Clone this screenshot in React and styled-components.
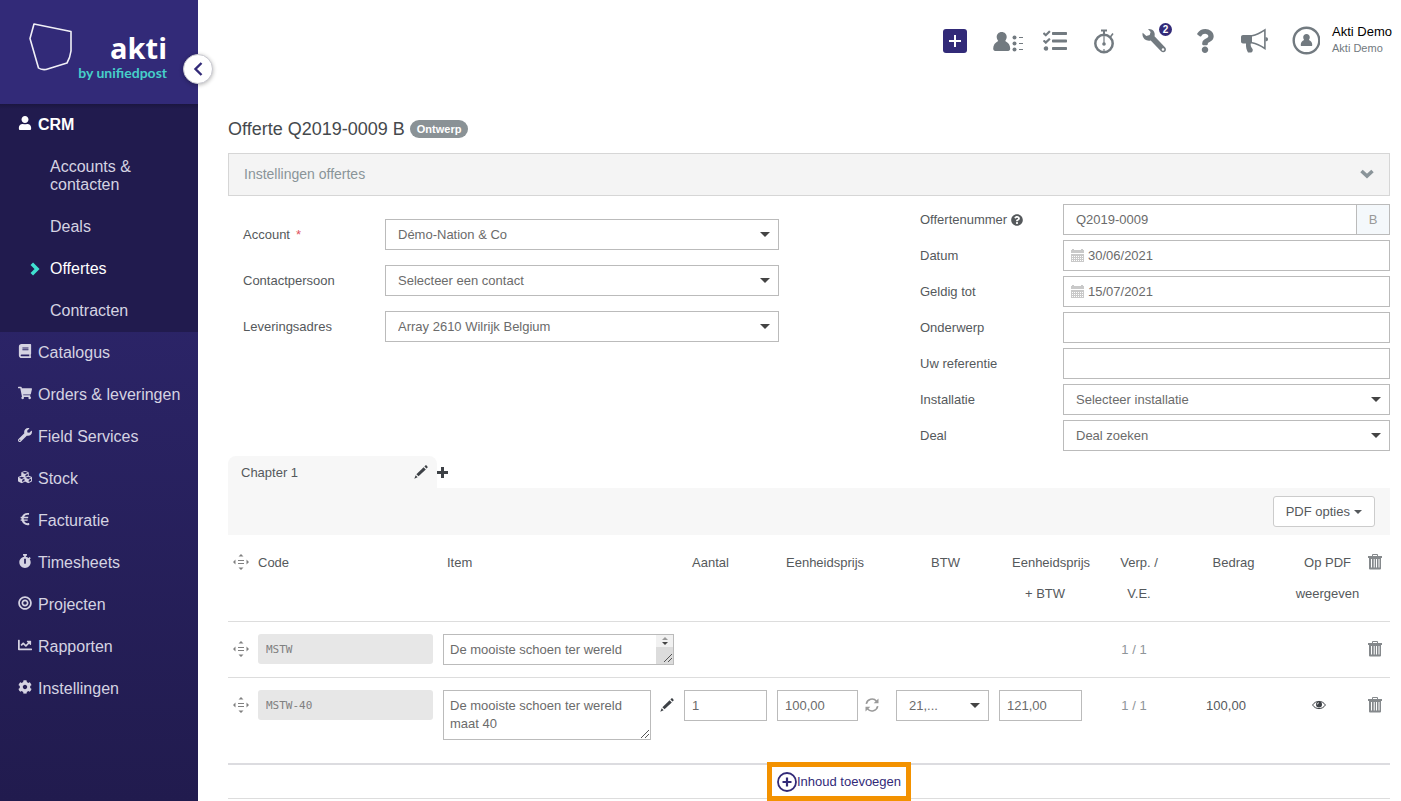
import styled, { createGlobalStyle, css } from "styled-components";
import {
  FaUser,
  FaBook,
  FaShoppingCart,
  FaWrench,
  FaCubes,
  FaEuroSign,
  FaStopwatch,
  FaBullseye,
  FaChartLine,
  FaCog,
  FaTasks,
  FaQuestion,
  FaQuestionCircle,
} from "react-icons/fa";

const menu = [
  { label: "Catalogus", Icon: FaBook },
  { label: "Orders & leveringen", Icon: FaShoppingCart },
  { label: "Field Services", Icon: FaWrench },
  { label: "Stock", Icon: FaCubes },
  { label: "Facturatie", Icon: FaEuroSign },
  { label: "Timesheets", Icon: FaStopwatch },
  { label: "Projecten", Icon: FaBullseye },
  { label: "Rapporten", Icon: FaChartLine },
  { label: "Instellingen", Icon: FaCog },
];

const subMenu = [
  { label: "Accounts & contacten" },
  { label: "Deals" },
  { label: "Offertes", active: true },
  { label: "Contracten" },
];

/* Icons */

const LogoShape = () => (
  <svg width="46" height="50" viewBox="0 0 46 50" fill="none" stroke="#f1f0f7" strokeWidth="1.600" strokeLinejoin="round">
    <path d="M6 2 L43 9.500 L43 29 Q42 36 39 41 L18 47.500 Q13 48 10.500 46 L2 16.500 Z" />
  </svg>
);

const ChevronLeft = () => (
  <svg width="10" height="16" viewBox="0 0 10 16" fill="none" stroke="#322a78" strokeWidth="2.400">
    <path d="M8.500 2 L2.500 8 L8.500 14" />
  </svg>
);

const ChevronRight = () => (
  <svg width="10" height="14" viewBox="0 0 10 14" fill="none" stroke="#40e0d0" strokeWidth="3.600">
    <path d="M1.800 1.800 L7 7 L1.800 12.200" />
  </svg>
);

const ChevronDown = () => (
  <svg width="14" height="10" viewBox="0 0 14 10" fill="none" stroke="#8a9499" strokeWidth="3.600">
    <path d="M1.500 2 L7 7 L12.500 2" />
  </svg>
);

const PlusIcon = () => (
  <svg width="14" height="14" viewBox="0 0 14 14" fill="#fff">
    <path d="M6 1h2v5h5v2H8v5H6V8H1V6h5z" />
  </svg>
);

const ContactsIcon = () => (
  <svg width="36" height="24" viewBox="0 0 36 24" fill="#727a80">
    <path d="M14.700 3c3 0 5 2.300 5 5 0 1.600-.7 2.700-1.500 4 3.200 1.600 5 4.200 5 7.500 0 1.500-.8 2.500-2 2.500H8.200c-1.200 0-2-1-2-2.500 0-3.300 1.800-5.900 5-7.500-.8-1.300-1.500-2.400-1.500-4 0-2.700 2-5 5-5z" />
    <circle cx="27.500" cy="8.500" r="2" />
    <circle cx="27.500" cy="14.500" r="2" />
    <circle cx="27.500" cy="20.500" r="2" />
    <path d="M32 8h4v1h-4zM32 14h4v1h-4zM32 20h4v1h-4z" />
  </svg>
);

const TimerIcon = () => (
  <svg width="24" height="26" viewBox="0 0 24 26" fill="none" stroke="#727a80">
    <circle cx="11" cy="15.500" r="8.700" strokeWidth="2.500" />
    <path d="M8 2.500h6" strokeWidth="2" />
    <path d="M11 3v4" strokeWidth="2" />
    <path d="M17 9.500l3-4" strokeWidth="1.500" />
    <path d="M11 8v8" strokeWidth="1.200" />
    <path d="M11 21v2" strokeWidth="1.200" />
    <circle cx="11" cy="16" r="1.800" fill="#727a80" stroke="none" />
  </svg>
);

const SpannerIcon = () => (
  <svg width="26" height="26" viewBox="0 0 26 26" fill="#727a80">
    <path
      fillRule="evenodd"
      d="M6 1c4-.7 7.300 2.300 6.700 6.300l-.2 1 10.500 11c1.300 1.300 1.300 3 .2 4.200-1.200 1.100-3 1-4.200-.2L8.700 12.500c-4 1-7.700-1.500-8.200-5.500-.1-1 0-1.600.2-2.200l3.600 3.300 3.400-1.100.9-3zM21 20.200a1.300 1.300 0 1 0 0 2.600 1.300 1.300 0 0 0 0-2.600z"
    />
  </svg>
);

const MegaphoneIcon = () => (
  <svg width="32" height="26" viewBox="0 0 32 26" fill="#727a80">
    <path d="M4 7h9v8.500h-1.200c-.5 1.700.2 3.700 1.700 5.500.8 1-.2 3.500-1.500 3.500H9c-1.400-2.500-2.300-5.500-2-9H4c-1.100 0-2-.9-2-2V9c0-1.100.9-2 2-2z" />
    <path d="M13 7.700c4.300-.8 8.700-3 12.900-5.800v18.600c-4.200-2.800-8.600-5-12.900-5.800" fill="none" stroke="#727a80" strokeWidth="1.600" />
    <path d="M26.500 9.200h.8c1 0 1.700.9 1.700 2s-.7 2-1.700 2h-.8z" />
  </svg>
);

const AvatarIcon = () => (
  <svg width="30" height="30" viewBox="0 0 30 30" fill="#727a80">
    <circle cx="16.500" cy="14.500" r="12.800" fill="none" stroke="#727a80" strokeWidth="2.400" />
    <path d="M16.500 8c2 0 3.300 1.500 3.300 3.300 0 1-.4 1.800-.9 2.600 1.900.8 3.300 2.300 3.300 4.300v1.200c0 .3-.3.600-.6.600H11.400c-.3 0-.6-.3-.6-.6v-1.200c0-2 1.400-3.500 3.300-4.300-.5-.8-.9-1.600-.9-2.600 0-1.800 1.300-3.300 3.300-3.300z" />
  </svg>
);

const CalendarIcon = () => (
  <svg width="13" height="13" viewBox="0 0 13 13" fill="#c9c9c9">
    <path d="M0 1h1V0h2v1h7V0h2v1h1v3H0z" />
    <path
      fillRule="evenodd"
      d="M0 5h13v8H0zM1 7v1h1V7zM3 7v1h1V7zM5 7v1h1V7zM7 7v1h1V7zM9 7v1h1V7zM11 7v1h1V7zM1 9v1h1V9zM3 9v1h1V9zM5 9v1h1V9zM7 9v1h1V9zM9 9v1h1V9zM11 9v1h1V9zM1 11v1h1v-1zM3 11v1h1v-1zM5 11v1h1v-1zM7 11v1h1v-1zM9 11v1h1v-1zM11 11v1h1v-1z"
    />
  </svg>
);

const PencilIcon = () => (
  <svg width="14" height="14" viewBox="0 0 14 14" fill="#3d4146">
    <path d="M9.600 2.200l2.200 2.200L4.500 11.300 2.400 9.200z" />
    <path d="M10.400 1.500l.9-.9c.4-.4.900-.4 1.300 0l.8.8c.4.400.4.900 0 1.300l-.9.900z" />
    <path d="M1.700 10.300l1.900 1.900L.3 13.700z" />
  </svg>
);

const AddTabIcon = () => (
  <svg width="11" height="11" viewBox="0 0 11 11" fill="#3d4146">
    <path d="M4 0h3v4h4v3H7v4H4V7H0V4h4z" />
  </svg>
);

const MoveIcon = () => (
  <svg width="16" height="16" viewBox="0 0 16 16" fill="#808080">
    <path d="M5 6h6v1H5zM5 9h6v1H5z" />
    <path d="M8 0l2.500 2.500h-5zM8 16l2.500-2.500h-5zM0 8l2.500-2.500v5zM16 8l-2.500-2.500v5z" />
  </svg>
);

const TrashIcon = () => (
  <svg width="14" height="16" viewBox="0 0 14 16" fill="#85898c">
    <path d="M4 2.500V1q0-1 1-1h4q1 0 1 1v1.500H9V1H5v1.500z" />
    <path d="M0 2h14v2H0z" />
    <path
      fillRule="evenodd"
      d="M1 4h12v10.500q0 1-1 1H2q-1 0-1-1zM3 5v8.500h1V5zM5.700 5v8.500h1V5zM8 5v8.500h1V5zM10.500 5v8.500h1V5z"
    />
  </svg>
);

const EyeIcon = () => (
  <svg width="14" height="10" viewBox="0 0 14 10" fill="none" stroke="#3d4146">
    <path d="M.6 5C3.500.200 10.500.200 13.400 5 10.500 9.800 3.500 9.800.6 5z" />
    <circle cx="7" cy="4.500" r="3" fill="#3d4146" stroke="none" />
    <path d="M5.300 4.500Q5.300 2.800 7 2.800" stroke="#fff" strokeWidth=".8" />
  </svg>
);

const RefreshIcon = () => (
  <svg width="14" height="14" viewBox="0 0 14 14" fill="none" stroke="#9a9a9a" strokeWidth="1.600">
    <path d="M1.300 5.800A5.800 5.800 0 0 1 11.500 3.200" />
    <path d="M12.700 8.200A5.800 5.800 0 0 1 2.500 10.800" />
    <path d="M13.500.5v4.800H8.700zM.5 13.500V8.700h4.800z" fill="#9a9a9a" stroke="none" />
  </svg>
);

const CirclePlusIcon = () => (
  <svg width="20" height="20" viewBox="0 0 20 20" fill="none" stroke="#322a78">
    <circle cx="10" cy="10" r="9" strokeWidth="1.800" />
    <path d="M10 5.500v9M5.500 10h9" strokeWidth="2.200" />
  </svg>
);

const Grip = () => (
  <svg width="10" height="10" viewBox="0 0 10 10" stroke="#555" strokeWidth="1">
    <path d="M1 9L9 1M5 9l4-4" />
  </svg>
);

const Spinner = () => (
  <svg width="17" height="29" viewBox="0 0 17 29">
    <path d="M0 0h17v12H0z" fill="#f1f1f1" />
    <path d="M0 12h17v17H0z" fill="#dcdcdc" />
    <path d="M6 5l3-3 3 3z" fill="#999" />
    <path d="M6 7l3 3 3-3z" fill="#444" />
    <path d="M8 27l8-8M12 27l4-4" stroke="#555" />
  </svg>
);

/* Page parts */

const Dropdown = ({ id, value, label }) => (
  <SelectWrap>
    <Select id={id} aria-label={label}>
      <option>{value}</option>
    </Select>
  </SelectWrap>
);

const Sidebar = () => (
  <SidebarNav>
    <LogoLink href="#">
      <LogoShape />
      <LogoText>
        <LogoName>akti</LogoName>
        <LogoTagline>by unifiedpost</LogoTagline>
      </LogoText>
    </LogoLink>
    <ToggleButton aria-label="Menu inklappen">
      <ChevronLeft />
    </ToggleButton>
    <ActiveSection>
      <MenuLink href="#" $active>
        <MenuIcon><FaUser /></MenuIcon>
        CRM
      </MenuLink>
      {subMenu.map((item) => (
        <SubLink href="#" key={item.label} $active={item.active}>
          <SubMarker>{item.active && <ChevronRight />}</SubMarker>
          {item.label}
        </SubLink>
      ))}
    </ActiveSection>
    {menu.map(({ label, Icon }) => (
      <MenuLink href="#" key={label}>
        <MenuIcon><Icon /></MenuIcon>
        {label}
      </MenuLink>
    ))}
  </SidebarNav>
);

const TopBar = () => (
  <TopBarContainer>
    <IconButton aria-label="Nieuw">
      <AddSquare><PlusIcon /></AddSquare>
    </IconButton>
    <IconButton aria-label="Contacten"><ContactsIcon /></IconButton>
    <IconButton aria-label="Taken"><FaTasks size={24} /></IconButton>
    <IconButton aria-label="Timer"><TimerIcon /></IconButton>
    <IconButton aria-label="Beheer">
      <SpannerIcon />
      <Count>2</Count>
    </IconButton>
    <IconButton aria-label="Help"><FaQuestion size={24} /></IconButton>
    <IconButton aria-label="Nieuws"><MegaphoneIcon /></IconButton>
    <IconButton aria-label="Profiel"><AvatarIcon /></IconButton>
    <UserInfo>
      <UserName>Akti Demo</UserName>
      <UserCompany>Akti Demo</UserCompany>
    </UserInfo>
  </TopBarContainer>
);

const OfferForm = () => (
  <FormGrid>
    <LeftFields>
      <Field>
        <Label htmlFor="account">Account <Required>*</Required></Label>
        <Dropdown id="account" value="Démo-Nation & Co" />
      </Field>
      <Field>
        <Label htmlFor="contact">Contactpersoon</Label>
        <Dropdown id="contact" value="Selecteer een contact" />
      </Field>
      <Field>
        <Label htmlFor="address">Leveringsadres</Label>
        <Dropdown id="address" value="Array 2610 Wilrijk Belgium" />
      </Field>
    </LeftFields>
    <RightFields>
      <Field>
        <Label htmlFor="number">Offertenummer <FaQuestionCircle size={12} /></Label>
        <InputGroup>
          <Input id="number" defaultValue="Q2019-0009" />
          <Addon>B</Addon>
        </InputGroup>
      </Field>
      <Field>
        <Label htmlFor="date">Datum</Label>
        <DateBox>
          <CalendarIcon />
          <DateInput id="date" defaultValue="30/06/2021" />
        </DateBox>
      </Field>
      <Field>
        <Label htmlFor="valid">Geldig tot</Label>
        <DateBox>
          <CalendarIcon />
          <DateInput id="valid" defaultValue="15/07/2021" />
        </DateBox>
      </Field>
      <Field>
        <Label htmlFor="subject">Onderwerp</Label>
        <Input id="subject" />
      </Field>
      <Field>
        <Label htmlFor="reference">Uw referentie</Label>
        <Input id="reference" />
      </Field>
      <Field>
        <Label htmlFor="installation">Installatie</Label>
        <Dropdown id="installation" value="Selecteer installatie" />
      </Field>
      <Field>
        <Label htmlFor="deal">Deal</Label>
        <Dropdown id="deal" value="Deal zoeken" />
      </Field>
    </RightFields>
  </FormGrid>
);

const LinesTable = () => (
  <Table>
    <colgroup>
      <Col $width={30} />
      <Col $width={185} />
      <col />
      <Col $width={93} />
      <Col $width={119} />
      <Col $width={103} />
      <Col $width={93} />
      <Col $width={94} />
      <Col $width={109} />
      <Col $width={65} />
      <Col $width={30} />
    </colgroup>
    <thead>
      <tr>
        <Th $right={4} $center><MoveIcon /></Th>
        <Th>Code</Th>
        <Th $left={4}>Item</Th>
        <Th $left={8}>Aantal</Th>
        <Th $left={9}>Eenheidsprijs</Th>
        <Th $right={4} $center>BTW</Th>
        <Th $left={13} $right={14} $center>Eenheidsprijs + BTW</Th>
        <Th $center>Verp. /<br />V.E.</Th>
        <Th $right={14} $center>Bedrag</Th>
        <Th $center>Op PDF<br />weergeven</Th>
        <Th $center><TrashIcon /></Th>
      </tr>
    </thead>
    <tbody>
      <tr>
        <Td $right={4} $center><MoveIcon /></Td>
        <Td><CodeInput aria-label="Code" defaultValue="MSTW" readOnly /></Td>
        <Td>
          <AreaWrap>
            <TextArea rows="1" aria-label="Item" defaultValue="De mooiste schoen ter wereld" />
            <Corner><Spinner /></Corner>
          </AreaWrap>
        </Td>
        <Td />
        <Td />
        <Td />
        <Td />
        <Td $right={10} $center><Muted>1 / 1</Muted></Td>
        <Td />
        <Td />
        <Td $right={0} $center><RowButton aria-label="Verwijderen"><TrashIcon /></RowButton></Td>
      </tr>
      <tr>
        <Td $right={4} $center><MoveIcon /></Td>
        <Td><CodeInput aria-label="Code" defaultValue="MSTW-40" readOnly /></Td>
        <Td>
          <CellFlex $gap={9}>
            <AreaWrap>
              <TextArea rows="2" aria-label="Item" defaultValue="De mooiste schoen ter wereld maat 40" />
              <Corner><Grip /></Corner>
            </AreaWrap>
            <RowButton aria-label="Bewerken"><PencilIcon /></RowButton>
          </CellFlex>
        </Td>
        <Td><CellInput aria-label="Aantal" defaultValue="1" /></Td>
        <Td $right={17}>
          <CellFlex $gap={7}>
            <CellInput aria-label="Eenheidsprijs" defaultValue="100,00" />
            <RowButton aria-label="Vernieuwen"><RefreshIcon /></RowButton>
          </CellFlex>
        </Td>
        <Td><Dropdown label="BTW" value="21,..." /></Td>
        <Td><CellInput aria-label="Eenheidsprijs + BTW" defaultValue="121,00" /></Td>
        <Td $right={10} $center><Muted>1 / 1</Muted></Td>
        <Td $right={29} $center>100,00</Td>
        <Td $right={18} $center><RowButton aria-label="Op PDF weergeven"><EyeIcon /></RowButton></Td>
        <Td $right={0} $center><RowButton aria-label="Verwijderen"><TrashIcon /></RowButton></Td>
      </tr>
    </tbody>
  </Table>
);

const App = () => {
  return (
    <>
      <GlobalStyle />
      <Layout>
        <Sidebar />
        <Main>
          <TopBar />
          <Content>
            <TitleRow>
              <Title>Offerte Q2019-0009 B</Title>
              <Badge>Ontwerp</Badge>
            </TitleRow>
            <SettingsBar>
              Instellingen offertes
              <ChevronDown />
            </SettingsBar>
            <OfferForm />
            <Tabs>
              <Tab>
                Chapter 1
                <TabButton aria-label="Hoofdstuk bewerken"><PencilIcon /></TabButton>
              </Tab>
              <TabButton aria-label="Hoofdstuk toevoegen"><AddTabIcon /></TabButton>
            </Tabs>
            <Toolbar>
              <PdfButton>PDF opties</PdfButton>
            </Toolbar>
            <LinesTable />
            <AddRow>
              <AddButton>
                <CirclePlusIcon />
                Inhoud toevoegen
              </AddButton>
            </AddRow>
          </Content>
        </Main>
      </Layout>
    </>
  );
};

export default App;

const GlobalStyle = createGlobalStyle`
  * {
    box-sizing: border-box;
  }

  body {
    margin: 0;
    background: #fff;
    color: #55595c;
    font-family: "Liberation Sans", Arial, sans-serif;
    font-size: 13px;
  }

  button, input, select, textarea {
    font-family: inherit;
    font-size: inherit;
  }

  svg {
    flex-shrink: 0;
  }
`;

const plainButton = css`
  display: flex;
  align-items: center;
  justify-content: center;
  padding: 0;
  border: 0;
  background: none;
  cursor: pointer;
`;

const Layout = styled.div`
  display: flex;
  min-height: 100vh;
`;

/* Sidebar */

const SidebarNav = styled.nav`
  position: relative;
  flex: 0 0 198px;
  background: linear-gradient(#322a78, #211b4e);
`;

const LogoLink = styled.a`
  display: flex;
  justify-content: space-between;
  height: 104px;
  padding: 22px 31px 0 28px;
  background: #322a78;
  text-decoration: none;
`;

const LogoText = styled.span`
  display: flex;
  flex-direction: column;
  align-items: flex-end;
  margin-left: -12px;
  padding-top: 9px;
  font-weight: 700;
`;

const LogoName = styled.span`
  color: #fff;
  font-family: "Open Sans", sans-serif;
  font-size: 29px;
  line-height: 34px;
`;

const LogoTagline = styled.span`
  color: #46cfc9;
  font-family: Lato, sans-serif;
  font-size: 14px;
  line-height: 16px;
  white-space: nowrap;
`;

const ToggleButton = styled.button`
  ${plainButton}
  position: absolute;
  top: 54px;
  right: -15px;
  width: 30px;
  height: 30px;
  border: 1px solid #c8c8d0;
  border-radius: 50%;
  background: #fff;
  box-shadow: 0 1px 4px rgba(0, 0, 0, 0.3);
`;

const ActiveSection = styled.div`
  background: linear-gradient(#1b1640, #211b4e 5px);
`;

const MenuLink = styled.a`
  display: flex;
  padding: 12px 10px 12px 18px;
  color: ${({ $active }) => ($active ? "#fff" : "#d5d3e2")};
  font-size: 16px;
  font-weight: ${({ $active }) => ($active ? 700 : 400)};
  line-height: 18px;
  text-decoration: none;
  white-space: nowrap;
`;

const MenuIcon = styled.span`
  flex: 0 0 20px;
  font-size: 14px;
  line-height: 14px;
`;

const SubLink = styled.a`
  display: flex;
  padding: 12px 30px;
  color: ${({ $active }) => ($active ? "#fff" : "#d5d3e2")};
  font-size: 16px;
  line-height: 18px;
  text-decoration: none;
`;

const SubMarker = styled.span`
  display: flex;
  align-items: center;
  flex: 0 0 20px;
`;

/* Top bar */

const Main = styled.main`
  flex: 1;
  min-width: 0;
`;

const TopBarContainer = styled.header`
  display: flex;
  align-items: center;
  justify-content: flex-end;
  height: 82px;
  padding-right: 9px;
`;

const IconButton = styled.button`
  ${plainButton}
  position: relative;
  width: 50px;
  height: 40px;
  color: #727a80;
`;

const AddSquare = styled.span`
  display: flex;
  align-items: center;
  justify-content: center;
  width: 24px;
  height: 24px;
  border-radius: 3px;
  background: #322a78;
`;

const Count = styled.span`
  position: absolute;
  top: 2px;
  right: 8px;
  width: 13px;
  height: 13px;
  border-radius: 50%;
  background: #322a78;
  color: #fff;
  font-size: 10px;
  font-weight: 700;
  line-height: 13px;
  text-align: center;
`;

const UserInfo = styled.div`
  margin-left: 2px;
  padding-bottom: 3px;
`;

const UserName = styled.div`
  color: #000;
  line-height: 18px;
`;

const UserCompany = styled.div`
  color: #727a80;
  font-size: 11px;
  line-height: 15px;
`;

/* Content */

const Content = styled.div`
  padding: 35px 11px 0 30px;
`;

const TitleRow = styled.div`
  display: flex;
  align-items: center;
  gap: 5px;
  margin-bottom: 12px;
`;

const Title = styled.h1`
  margin: 0;
  color: #45494d;
  font-size: 18px;
  font-weight: 400;
  line-height: 24px;
`;

const Badge = styled.span`
  padding: 0 7px;
  border-radius: 9px;
  background: #8a9296;
  color: #fff;
  font-size: 11px;
  font-weight: 700;
  line-height: 18px;
`;

const SettingsBar = styled.div`
  display: flex;
  align-items: center;
  justify-content: space-between;
  height: 43px;
  padding: 0 15px 2px;
  border: 1px solid #d6d6d6;
  background: #f4f4f4;
  color: #8a9499;
  font-size: 14px;
`;

const FormGrid = styled.div`
  display: grid;
  grid-template-columns: 551fr 470fr;
  gap: 141px;
  padding: 8px 0 5px;
`;

const Field = styled.div`
  display: grid;
  grid-template-columns: 142px 1fr;
  align-items: center;
`;

const LeftFields = styled.div`
  display: flex;
  flex-direction: column;
  gap: 15px;
  padding: 15px 0 0 15px;
`;

const RightFields = styled.div`
  display: flex;
  flex-direction: column;
  gap: 5px;

  ${Field} {
    grid-template-columns: 143px 1fr;
  }
`;

const Label = styled.label`
  display: flex;
  align-items: center;
  gap: 4px;
`;

const Required = styled.span`
  padding-left: 2px;
  color: #e05260;
`;

const boxStyle = css`
  width: 100%;
  min-width: 0;
  height: 31px;
  border: 1px solid #bbb;
  border-radius: 0;
  background: #fff;
  color: #6b6b6b;
`;

const Input = styled.input`
  ${boxStyle}
  padding: 0 12px;
`;

const InputGroup = styled.div`
  display: flex;
`;

const Addon = styled.span`
  flex: 0 0 33px;
  border: 1px solid #bbb;
  border-left: 0;
  background: #f4f8fb;
  color: #999;
  line-height: 29px;
  text-align: center;
`;

const DateBox = styled.div`
  ${boxStyle}
  display: flex;
  align-items: center;
  gap: 4px;
  padding: 0 7px;
`;

const DateInput = styled.input`
  flex: 1;
  min-width: 0;
  padding: 0;
  border: 0;
  color: #6b6b6b;
`;

const SelectWrap = styled.div`
  position: relative;

  &::after {
    content: "";
    position: absolute;
    top: 13px;
    right: 9px;
    border: 5px solid transparent;
    border-top-color: #444;
    border-bottom: 0;
    pointer-events: none;
  }
`;

const Select = styled.select`
  ${boxStyle}
  display: block;
  padding: 0 24px 0 12px;
  appearance: none;
`;

/* Chapter tabs and lines */

const Tabs = styled.div`
  display: flex;
`;

const Tab = styled.div`
  display: flex;
  align-items: center;
  justify-content: space-between;
  width: 209px;
  height: 32px;
  padding: 0 9px 0 13px;
  border-radius: 8px 8px 0 0;
  background: #f7f7f7;
`;

const TabButton = styled.button`
  ${plainButton}
`;

const Toolbar = styled.div`
  display: flex;
  justify-content: flex-end;
  padding: 8px 15px;
  background: #f7f7f7;
`;

const PdfButton = styled.button`
  ${plainButton}
  gap: 4px;
  height: 31px;
  padding: 0 12px;
  border: 1px solid #ccc;
  border-radius: 3px;
  background: #fff;
  color: #55595c;

  &::after {
    content: "";
    border: 4px solid transparent;
    border-top-color: #55595c;
    border-bottom: 0;
  }
`;

const Table = styled.table`
  width: 100%;
  margin-bottom: 11px;
  border-spacing: 0;
  table-layout: fixed;

  tr:last-child td {
    border-bottom: 0;
  }
`;

const Col = styled.col`
  width: ${({ $width }) => $width}px;
`;

const cellStyle = css`
  border-bottom: 1px solid #ddd;
  line-height: 31px;
  text-align: ${({ $center }) => ($center ? "center" : "left")};
  vertical-align: top;

  > svg {
    display: block;
    margin: 7px auto 0;
  }
`;

const Th = styled.th`
  ${cellStyle}
  padding: 12px ${({ $right = 0 }) => $right}px 12px ${({ $left = 0 }) => $left}px;
  font-weight: 400;

  tr:last-child > & {
    border-bottom: 1px solid #ddd;
  }
`;

const Td = styled.td`
  ${cellStyle}
  padding: 12px ${({ $right = 10 }) => $right}px 12px 0;
`;

const CellFlex = styled.div`
  display: flex;
  align-items: flex-start;
  gap: ${({ $gap }) => $gap}px;
`;

const CellInput = styled.input`
  ${boxStyle}
  display: block;
  padding: 0 7px;
`;

const CodeInput = styled.input`
  display: block;
  width: 100%;
  height: 30px;
  padding: 0 8px;
  border: 0;
  border-radius: 3px;
  background: #e7e7e7;
  color: #808080;

  &[readonly] {
    font-family: "DejaVu Sans Mono", monospace;
    font-size: 11px;
  }
`;

const AreaWrap = styled.div`
  position: relative;
  flex: 1;
  min-width: 0;
`;

const TextArea = styled.textarea`
  ${boxStyle}
  display: block;
  height: ${({ rows }) => (rows === "1" ? 31 : 50)}px;
  padding: 6px;
  line-height: 18px;
  overflow: hidden;
  resize: none;
`;

const Corner = styled.span`
  position: absolute;
  right: 1px;
  bottom: 1px;
  display: flex;
  pointer-events: none;
`;

const RowButton = styled.button`
  ${plainButton}
  display: inline-flex;
  height: 30px;
  vertical-align: top;
`;

const Muted = styled.span`
  color: #8f9599;
`;

const AddRow = styled.div`
  display: flex;
  justify-content: center;
  padding: 2px 0 2px 60px;
  border-top: 2px solid #dcdce0;
  border-bottom: 1px solid #ddd;
`;

const AddButton = styled.button`
  ${plainButton}
  height: 29px;
  padding: 0 5px;
  outline: 5px solid #f39200;
  color: #322a78;
`;
